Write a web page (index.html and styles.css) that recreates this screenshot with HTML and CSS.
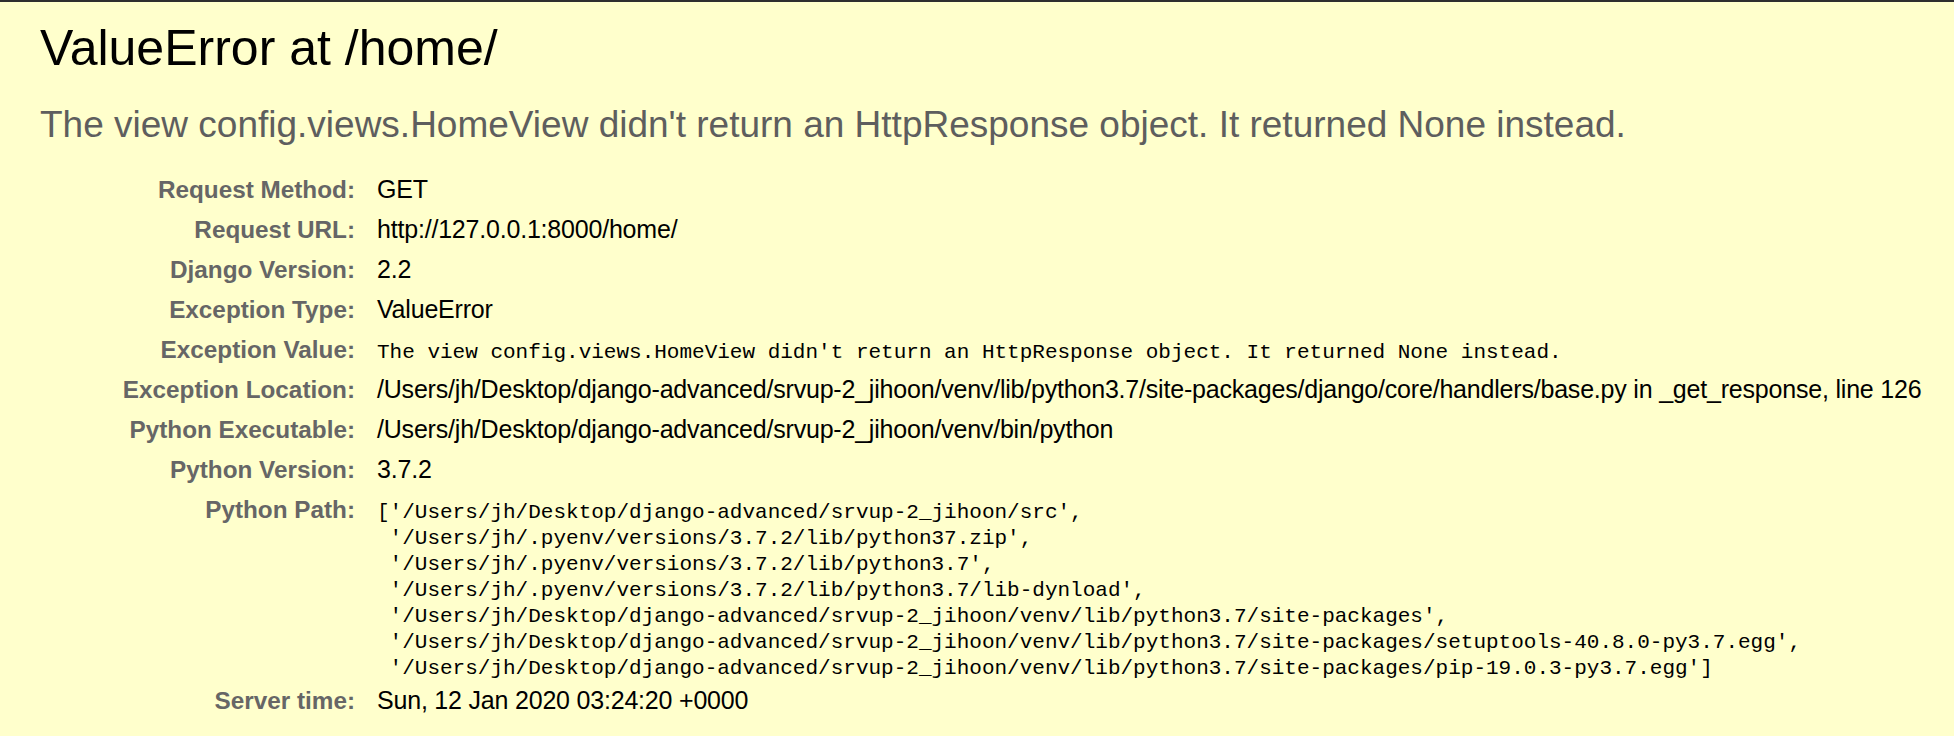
FILE: index.html
```html
<!DOCTYPE html>
<html lang="en">
<head>
<meta charset="utf-8">
<title>ValueError at /home/</title>
<link rel="stylesheet" href="styles.css">
</head>
<body>
<div class="summary">
  <h1 class="title">ValueError at /home/</h1>
  <h2 class="subtitle">The view config.views.HomeView didn't return an HttpResponse object. It returned None instead.</h2>
  <table class="meta">
    <tbody>
      <tr><th>Request Method:</th><td>GET</td></tr>
      <tr><th>Request URL:</th><td>http://127.0.0.1:8000/home/</td></tr>
      <tr><th>Django Version:</th><td>2.2</td></tr>
      <tr><th>Exception Type:</th><td>ValueError</td></tr>
      <tr><th>Exception Value:</th><td><pre class="mono">The view config.views.HomeView didn't return an HttpResponse object. It returned None instead.</pre></td></tr>
      <tr><th>Exception Location:</th><td>/Users/jh/Desktop/django-advanced/srvup-2_jihoon/venv/lib/python3.7/site-packages/django/core/handlers/base.py in _get_response, line 126</td></tr>
      <tr><th>Python Executable:</th><td>/Users/jh/Desktop/django-advanced/srvup-2_jihoon/venv/bin/python</td></tr>
      <tr><th>Python Version:</th><td>3.7.2</td></tr>
      <tr><th>Python Path:</th><td><pre class="mono">['/Users/jh/Desktop/django-advanced/srvup-2_jihoon/src',
 '/Users/jh/.pyenv/versions/3.7.2/lib/python37.zip',
 '/Users/jh/.pyenv/versions/3.7.2/lib/python3.7',
 '/Users/jh/.pyenv/versions/3.7.2/lib/python3.7/lib-dynload',
 '/Users/jh/Desktop/django-advanced/srvup-2_jihoon/venv/lib/python3.7/site-packages',
 '/Users/jh/Desktop/django-advanced/srvup-2_jihoon/venv/lib/python3.7/site-packages/setuptools-40.8.0-py3.7.egg',
 '/Users/jh/Desktop/django-advanced/srvup-2_jihoon/venv/lib/python3.7/site-packages/pip-19.0.3-py3.7.egg']</pre></td></tr>
      <tr><th>Server time:</th><td>Sun, 12 Jan 2020 03:24:20 +0000</td></tr>
    </tbody>
  </table>
</div>
</body>
</html>
```

FILE: styles.css
```css
* {
  margin: 0;
  padding: 0;
}

html,
body {
  background: #ffc;
}

body {
  font-family: "Liberation Sans", Arial, sans-serif;
  color: #000;
  overflow: hidden;
}

.summary {
  border-top: 2px solid #2e2e2e;
  padding: 22px 40px 40px;
  background: #ffc;
}

.title {
  font-size: 50px;
  line-height: 49px;
  font-weight: normal;
  color: #000;
}

.subtitle {
  font-size: 37px;
  line-height: 37px;
  font-weight: normal;
  color: #5e5e5e;
  margin: 33px 0 27px;
  white-space: nowrap;
}

.meta {
  border-collapse: collapse;
  border-spacing: 0;
  width: max-content;
}

.meta th,
.meta td {
  vertical-align: baseline;
  padding: 4px 6px;
  white-space: nowrap;
}

.meta th {
  width: 309px;
  min-width: 309px;
  text-align: right;
  color: #666;
  font-weight: bold;
  font-size: 24.3px;
  line-height: 32px;
  padding-right: 11px;
}

.meta td {
  padding-left: 11px;
  font-size: 25px;
  line-height: 30px;
  letter-spacing: -0.2px;
}

.mono {
  font-family: "Liberation Mono", "Courier New", monospace;
  font-size: 21px;
  line-height: 26px;
  letter-spacing: 0;
  margin-bottom: -5px;
}
```
